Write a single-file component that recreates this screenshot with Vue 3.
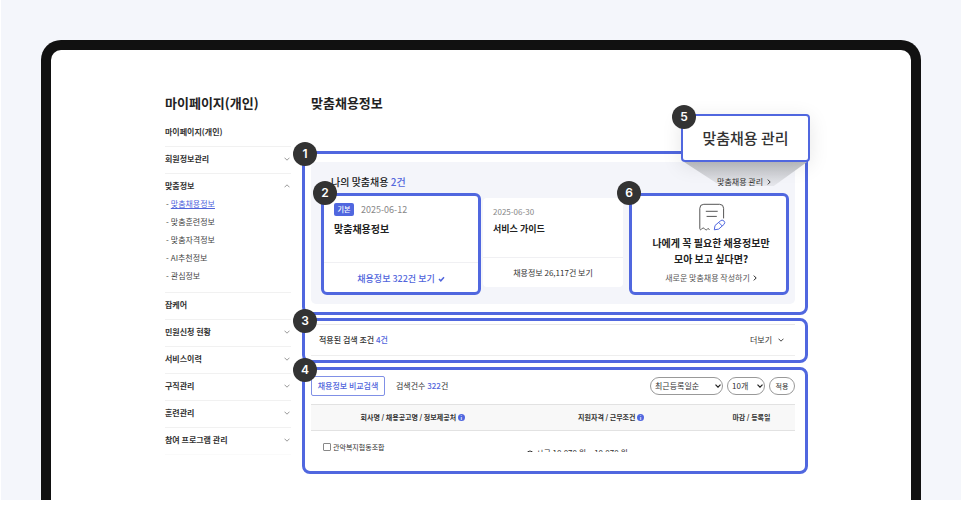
<script setup>
import { ref } from 'vue'

const menu = [
  { label: '마이페이지(개인)' },
  { label: '회원정보관리', more: true },
  {
    label: '맞춤정보',
    more: true,
    open: true,
    children: ['맞춤채용정보', '맞춤훈련정보', '맞춤자격정보', 'AI추천정보', '관심정보']
  },
  { label: '잡케어' },
  { label: '민원신청 현황', more: true },
  { label: '서비스이력', more: true },
  { label: '구직관리', more: true },
  { label: '훈련관리', more: true },
  { label: '참여 프로그램 관리', more: true }
]

const current = '맞춤채용정보'
const sort = ref('최근등록일순')
const size = ref('10개')
</script>

<template>
  <div class="stage">
    <div class="device">
      <nav class="side" aria-label="마이페이지">
        <h2 class="title">마이페이지(개인)</h2>
        <ul class="menu">
          <li v-for="item in menu" :key="item.label" class="menu-item">
            <a href="#" class="menu-link">
              <span>{{ item.label }}</span>
              <svg v-if="item.more" class="fold" :class="{ up: item.open }" viewBox="0 0 6 4">
                <path d="M.5 .7 3 3.2 5.5 .7" />
              </svg>
            </a>
            <ul v-if="item.children" class="sub">
              <li v-for="child in item.children" :key="child">
                <span class="dash">-</span><a href="#" :class="{ current: child === current }">{{ child }}</a>
              </li>
            </ul>
          </li>
        </ul>
      </nav>

      <main class="main">
        <h1 class="title main-title">맞춤채용정보</h1>

        <section class="frame first">
          <span class="num">1</span>
          <div class="panel">
            <header class="panel-head">
              <h3>나의 맞춤채용 <em>2건</em></h3>
              <a href="#" class="manage">
                맞춤채용 관리
                <svg class="next" viewBox="0 0 4 6"><path d="M.8 .6 3.2 3 .8 5.4" /></svg>
              </a>
            </header>
            <div class="cards">
              <article class="frame card">
                <span class="num num-two">2</span>
                <div class="card-body">
                  <div class="meta"><span class="tag">기본</span><time class="date">2025-06-12</time></div>
                  <h4>맞춤채용정보</h4>
                </div>
                <a href="#" class="card-foot accent">
                  채용정보 322건 보기
                  <svg class="check" viewBox="0 0 7 6"><path d="M1 3 2.8 4.8 6 1.2" /></svg>
                </a>
              </article>
              <article class="card plain">
                <div class="card-body">
                  <div class="meta"><time class="date small">2025-06-30</time></div>
                  <h4 class="sub-title">서비스 가이드</h4>
                </div>
                <a href="#" class="card-foot">채용정보 26,117건 보기</a>
              </article>
              <article class="frame card create">
                <span class="num num-six">6</span>
                <svg class="note" viewBox="0 0 27 28">
                  <path
                    class="paper"
                    d="M24.6 15V5.3a4 4 0 0 0-4-4H4.8a4 4 0 0 0-4 4V25.6c0 1.3 1 1.5 1.8.5.9-1.2 2.1-1.500 3-.300.9 1.200 2.100 1.500 2.900.300.500-.8 1-.9 1.700.400"
                  />
                  <path class="paper" d="M7.200 8.300H18.300M8 13.400H17.400" />
                  <path
                    class="pencil"
                    d="M15.300 26.800 16 22.500 21.300 18a2.500 2.500 0 0 1 3.700 3.400L19.700 26.100 15.300 26.800ZM19.700 19.400 23.300 23"
                  />
                </svg>
                <p class="ask">나에게 꼭 필요한 채용정보만<br />모아 보고 싶다면?</p>
                <a href="#" class="make">
                  새로운 맞춤채용 작성하기
                  <svg class="next" viewBox="0 0 4 6"><path d="M.8 .6 3.2 3 .8 5.4" /></svg>
                </a>
              </article>
            </div>
          </div>
          <div class="beam"></div>
          <div class="callout"><span class="num">5</span>맞춤채용 관리</div>
        </section>

        <section class="frame second">
          <span class="num">3</span>
          <div class="terms">
            <h3>적용된 검색 조건 <em>4건</em></h3>
            <button type="button" class="expand">
              더보기
              <svg class="fold dark" viewBox="0 0 6 4"><path d="M.5 .7 3 3.2 5.5 .7" /></svg>
            </button>
          </div>
        </section>

        <section class="frame third">
          <span class="num">4</span>
          <div class="tools">
            <button type="button" class="compare">채용정보 비교검색</button>
            <p class="count">검색건수 <strong>322</strong>건</p>
            <div class="picker sort">
              <select v-model="sort" class="pill" aria-label="정렬">
                <option>최근등록일순</option>
              </select>
              <svg class="arrow" viewBox="0 0 6 4"><path d="M.5 .7 3 3.2 5.5 .7" /></svg>
            </div>
            <div class="picker size">
              <select v-model="size" class="pill" aria-label="목록 수">
                <option>10개</option>
              </select>
              <svg class="arrow" viewBox="0 0 6 4"><path d="M.5 .7 3 3.2 5.5 .7" /></svg>
            </div>
            <button type="button" class="pill apply">적용</button>
          </div>
          <div class="list">
            <table>
              <colgroup>
                <col class="c1" />
                <col class="c2" />
                <col class="c3" />
              </colgroup>
              <thead>
                <tr>
                  <th>회사명 / 채용공고명 / 정보제공처 <i class="info">i</i></th>
                  <th>지원자격 / 근무조건 <i class="info">i</i></th>
                  <th>마감 / 등록일</th>
                </tr>
              </thead>
              <tbody>
                <tr>
                  <td class="company">
                    <label><input type="checkbox" />관악복지협동조합</label>
                  </td>
                  <td class="pay">
                    <svg class="coin" viewBox="0 0 8 8"><circle cx="4" cy="4" r="3" /><path d="M4 2.500v3" /></svg>
                    시급 10,070 원 ~ 10,070 원
                  </td>
                  <td></td>
                </tr>
              </tbody>
            </table>
          </div>
        </section>
      </main>
    </div>
  </div>
</template>

<style>
body {
  margin: 0;
  background: #fff;
}
</style>

<style scoped>
* {
  box-sizing: border-box;
}
.stage {
  margin-left: 1px;
  padding: 40px 40px 0;
  background: #f4f6fb;
  color: #333;
  font: 8px/14px 'Noto Sans CJK KR', sans-serif;
  overflow: hidden;
}
h1,
h2,
h3,
h4,
p,
ul {
  margin: 0;
  padding: 0;
  font-size: inherit;
}
ul {
  list-style: none;
}
a {
  color: inherit;
  text-decoration: none;
}
em,
i {
  font-style: normal;
}
button,
select,
input {
  margin: 0;
  font: inherit;
  color: inherit;
}
svg {
  fill: none;
  stroke: currentColor;
  flex: none;
}
.device {
  display: flex;
  gap: 11px;
  padding: 43px 103px 26px 114px;
  border: 10px solid #111;
  border-bottom: 0;
  border-radius: 20px 20px 0 0;
  background: #fff;
}
.side {
  flex: 0 0 126px;
}
.title {
  font-size: 13px;
  line-height: 20px;
  font-weight: 700;
  color: #222;
  white-space: nowrap;
}
.menu {
  margin-top: 7px;
}
.menu-item {
  padding: 5px 0 7px;
  border-bottom: 1px solid #f1f1f1;
}
.menu-item:last-child {
  border-color: #fafafa;
}
.menu-link {
  display: flex;
  justify-content: space-between;
  align-items: center;
  padding-right: 1px;
  font-weight: 700;
}
.fold {
  width: 6px;
  height: 4px;
  color: #999;
}
.fold.up {
  transform: rotate(180deg);
}
.fold.dark {
  color: #444;
}
.sub {
  margin-top: 2px;
  line-height: 18px;
  color: #444;
}
.dash {
  margin: 0 2px 0 1px;
}
.sub .current {
  color: #5165dc;
  text-decoration: underline;
}
.main {
  flex: 1;
  min-width: 0;
}
.main-title {
  padding-left: 9px;
}
.frame {
  position: relative;
  border: 3px solid #5067df;
  border-radius: 8px;
}
.first {
  margin-top: 38px;
  padding: 8px 10px 8px 6px;
}
.second {
  margin-top: 3px;
  padding: 3px 10px 4px 6px;
}
.third {
  margin-top: 4px;
  padding: 6px 10px 19px 6px;
}
.num {
  position: absolute;
  z-index: 3;
  top: -12px;
  left: -12px;
  width: 24px;
  height: 24px;
  border-radius: 50%;
  background: #333;
  color: #fff;
  font: 600 12px/24px Inter, sans-serif;
  text-align: center;
}
.num-two {
  top: -15px;
  left: -11px;
}
.num-six {
  top: -15px;
  left: -15px;
}
.panel {
  padding: 12px 6px 9px 10px;
  border-radius: 5px;
  background: #f4f5fa;
}
.panel-head {
  display: flex;
  justify-content: space-between;
  align-items: center;
  height: 16px;
  margin-bottom: 3px;
  padding: 0 18px 0 10px;
}
h3 {
  font-weight: 500;
}
.panel-head h3 {
  font-size: 10px;
  color: #222;
}
em,
strong {
  color: #5165dc;
  font-weight: 500;
}
.manage {
  position: relative;
  z-index: 2;
  display: flex;
  align-items: center;
  gap: 4px;
}
.next {
  width: 4px;
  height: 6px;
}
.cards {
  display: grid;
  grid-template-columns: 160fr 148fr 160fr;
  height: 102px;
}
.card {
  display: flex;
  flex-direction: column;
  min-width: 0;
  background: #fff;
  white-space: nowrap;
}
.card.frame {
  border-radius: 6px;
}
.plain {
  margin: 5px 6px 8px 2px;
  border-radius: 4px;
}
.card-body {
  flex: 1;
  padding: 7px 10px 0;
}
.meta {
  display: flex;
  align-items: center;
  gap: 7px;
  height: 13px;
}
.tag {
  width: 20px;
  border-radius: 2px;
  background: #5067df;
  color: #fff;
  font-size: 7px;
  font-weight: 500;
  line-height: 13px;
  text-align: center;
}
.date {
  color: #888;
  font-size: 9px;
}
.date.small {
  font-size: 8px;
}
h4 {
  margin-top: 5px;
  font-size: 10px;
  line-height: 16px;
  font-weight: 700;
  color: #222;
}
.sub-title {
  margin-top: 3px;
  font-size: 9px;
}
.card-foot {
  display: flex;
  justify-content: center;
  align-items: center;
  gap: 3px;
  height: 30px;
  border-top: 1px solid #f0f0f3;
}
.accent {
  padding-top: 2px;
  color: #5165dc;
  font-size: 9px;
  font-weight: 500;
}
.check {
  width: 7px;
  height: 6px;
  stroke-width: 1.5;
}
.create {
  align-items: center;
  padding: 7px 0 0 4px;
}
.note {
  width: 27px;
  height: 28px;
  margin-left: 2px;
}
.paper {
  stroke: #555;
  stroke-linecap: round;
}
.pencil {
  stroke: #5067df;
  stroke-linejoin: round;
}
.ask {
  margin-top: 4px;
  color: #222;
  font-size: 10px;
  line-height: 16px;
  font-weight: 700;
  text-align: center;
}
.make {
  display: flex;
  align-items: center;
  gap: 3px;
  margin-top: 4px;
  color: #555;
}
.make .next {
  color: #222;
}
.callout {
  position: absolute;
  top: -40px;
  right: -5px;
  z-index: 2;
  width: 129px;
  height: 48px;
  border: 2px solid #5067df;
  border-radius: 4px;
  background: #fff;
  box-shadow: 0 4px 20px rgba(0, 0, 0, 0.1);
  color: #333;
  font-size: 15px;
  line-height: 44px;
  font-weight: 500;
  text-align: center;
}
.callout .num {
  top: -11px;
  left: -11px;
}
.beam {
  position: absolute;
  z-index: 1;
  top: 8px;
  right: -2px;
  width: 123px;
  height: 24px;
  background: linear-gradient(#bfc1c5, #e6e7ec);
  clip-path: polygon(0 0, 100% 0, 73% 100%, 30% 100%);
}
.terms {
  display: flex;
  justify-content: space-between;
  align-items: center;
  height: 32px;
  padding: 0 11px 0 8px;
  border-top: 1px solid #e8e8e8;
  border-bottom: 1px solid #eee;
}
.expand {
  display: flex;
  align-items: center;
  gap: 6px;
  padding: 0;
  border: 0;
  background: none;
}
.tools {
  display: flex;
  align-items: center;
  gap: 4px;
  height: 20px;
  white-space: nowrap;
}
.compare {
  width: 74px;
  height: 20px;
  padding: 0;
  border: 1px solid #8090e6;
  border-radius: 2px;
  background: #fff;
  color: #5165dc;
  font-weight: 500;
}
.count {
  margin: 0 auto 0 7px;
}
.pill {
  height: 18px;
  border: 1px solid #999;
  border-radius: 9px;
  background: #fff;
  padding: 0;
}
.picker {
  position: relative;
  display: flex;
}
.picker .pill {
  width: 100%;
  padding-left: 4px;
  appearance: none;
}
.sort {
  width: 73px;
}
.size {
  width: 38px;
}
.arrow {
  position: absolute;
  top: 7px;
  right: 2px;
  width: 6px;
  height: 4px;
  color: #222;
  stroke-width: 1.2;
  pointer-events: none;
}
.apply {
  width: 26px;
  font-size: 7px;
}
.list {
  height: 48px;
  margin-top: 8px;
  overflow: hidden;
}
table {
  width: 100%;
  table-layout: fixed;
  border-collapse: collapse;
  font-size: 7px;
  white-space: nowrap;
}
.c1 {
  width: 42%;
}
.c2 {
  width: 40%;
}
.c3 {
  width: 18%;
}
th {
  height: 26px;
  padding: 0 0 2px;
  border-top: 1px solid #e2e2e2;
  border-bottom: 1px solid #e2e2e2;
  background: #f8f8f8;
  font-weight: 700;
}
td {
  padding: 0;
  vertical-align: top;
}
.info {
  display: inline-block;
  width: 7px;
  height: 7px;
  border-radius: 50%;
  background: #5067df;
  color: #fff;
  font-size: 5px;
  line-height: 7px;
}
.company {
  padding: 9px 0 0 12px;
}
label {
  display: flex;
  align-items: center;
  gap: 2px;
}
input {
  appearance: none;
  width: 8px;
  height: 8px;
  border: 1px solid #888;
  border-radius: 1px;
  background: #fff;
}
.pay {
  padding: 15px 0 0 12px;
  font-size: 8px;
}
.coin {
  width: 8px;
  height: 8px;
  vertical-align: middle;
}
</style>
